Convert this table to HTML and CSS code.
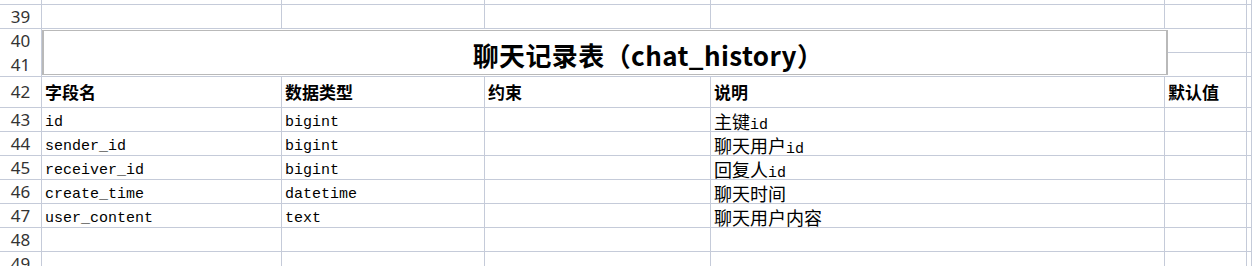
FILE: index.html
```html
<!DOCTYPE html>
<html lang="zh-CN">
<head>
<meta charset="utf-8">
<title>聊天记录表</title>
<link rel="stylesheet" href="styles.css">
</head>
<body>
<div class="sheet">
  <!-- row 38 (tail) -->
  <div class="c rh"></div><div class="c"></div><div class="c"></div><div class="c"></div><div class="c"></div><div class="c"></div><div class="c"></div>
  <!-- row 39 -->
  <div class="c rh">39</div><div class="c"></div><div class="c"></div><div class="c"></div><div class="c"></div><div class="c"></div><div class="c"></div>
  <!-- rows 40-41 -->
  <div class="c rh rh-merged"><span>40</span><span>41</span></div>
  <div class="title-cell"><div class="title-box">聊天记录表（chat_history）</div></div>
  <div class="c r40 ce"></div><div class="c r40 cf"></div>
  <div class="c r41 ce"></div><div class="c r41 cf"></div>
  <!-- row 42 -->
  <div class="c rh">42</div><div class="c h">字段名</div><div class="c h">数据类型</div><div class="c h">约束</div><div class="c h">说明</div><div class="c h">默认值</div><div class="c"></div>
  <!-- row 43 -->
  <div class="c rh">43</div><div class="c t">id</div><div class="c t">bigint</div><div class="c"></div><div class="c t"><span class="cn">主键</span>id</div><div class="c"></div><div class="c"></div>
  <!-- row 44 -->
  <div class="c rh">44</div><div class="c t">sender_id</div><div class="c t">bigint</div><div class="c"></div><div class="c t"><span class="cn">聊天用户</span>id</div><div class="c"></div><div class="c"></div>
  <!-- row 45 -->
  <div class="c rh">45</div><div class="c t">receiver_id</div><div class="c t">bigint</div><div class="c"></div><div class="c t"><span class="cn">回复人</span>id</div><div class="c"></div><div class="c"></div>
  <!-- row 46 -->
  <div class="c rh">46</div><div class="c t">create_time</div><div class="c t">datetime</div><div class="c"></div><div class="c t"><span class="cn">聊天时间</span></div><div class="c"></div><div class="c"></div>
  <!-- row 47 -->
  <div class="c rh">47</div><div class="c t">user_content</div><div class="c t">text</div><div class="c"></div><div class="c t"><span class="cn">聊天用户内容</span></div><div class="c"></div><div class="c"></div>
  <!-- row 48 -->
  <div class="c rh">48</div><div class="c"></div><div class="c"></div><div class="c"></div><div class="c"></div><div class="c"></div><div class="c"></div>
  <!-- row 49 -->
  <div class="c rh">49</div><div class="c"></div><div class="c"></div><div class="c"></div><div class="c"></div><div class="c"></div><div class="c"></div>
</div>
</body>
</html>
```

FILE: styles.css
```css
html, body {
  margin: 0;
  padding: 0;
  background: #ffffff;
  overflow: hidden;
}

.sheet {
  display: grid;
  width: 1252px;
  grid-template-columns: 42px 240px 203px 226px 454px 82px 1fr;
  grid-template-rows: 5px 24px 24px 24px 31px repeat(7, 24px);
}

.c {
  box-sizing: border-box;
  border-right: 1px solid #c5cbd9;
  border-bottom: 1px solid #c5cbd9;
  min-width: 0;
  white-space: nowrap;
  color: #000;
}

.t {
  display: block;
  padding: 6px 0 0 3px;
  font-family: "Liberation Mono", monospace;
  font-size: 15px;
  line-height: 18px;
}

.cn {
  font-family: "Noto Sans CJK SC", sans-serif;
  font-size: 18px;
  line-height: 14px;
}

.rh {
  display: flex;
  justify-content: center;
  align-items: center;
  font-family: "Noto Sans", "Open Sans", sans-serif;
  font-size: 17px;
  line-height: 24px;
  color: #333;
  overflow: hidden;
}

.rh-merged {
  grid-row: 3 / 5;
  flex-direction: column;
  justify-content: flex-start;
}

.rh-merged span {
  height: 24px;
  line-height: 24px;
}

.r40 { grid-row: 3; }
.r41 { grid-row: 4; }
.ce { grid-column: 6; }
.cf { grid-column: 7; }

.title-cell {
  grid-column: 2 / 6;
  grid-row: 3 / 5;
  box-sizing: border-box;
  border-bottom: 1px solid #c5cbd9;
  padding: 1px 0 1px 0;
  display: flex;
  position: relative;
  z-index: 1;
}

.title-box {
  flex: 1;
  margin-right: -3px;
  box-sizing: border-box;
  border: 1px solid #b9b9b9;
  border-left-width: 2px;
  border-right-width: 2px;
  background: #fff;
  display: flex;
  align-items: center;
  justify-content: center;
  padding: 4px 0 0 86px;
  font-family: "Noto Sans CJK SC", sans-serif;
  font-weight: 700;
  font-size: 26px;
  line-height: 32px;
  letter-spacing: 0.4px;
  color: #000;
  white-space: nowrap;
}

.h {
  display: flex;
  align-items: center;
  padding: 0 0 0 3px;
  font-family: "Noto Sans CJK SC", sans-serif;
  font-weight: 700;
  font-size: 17px;
  line-height: 24px;
}
```
